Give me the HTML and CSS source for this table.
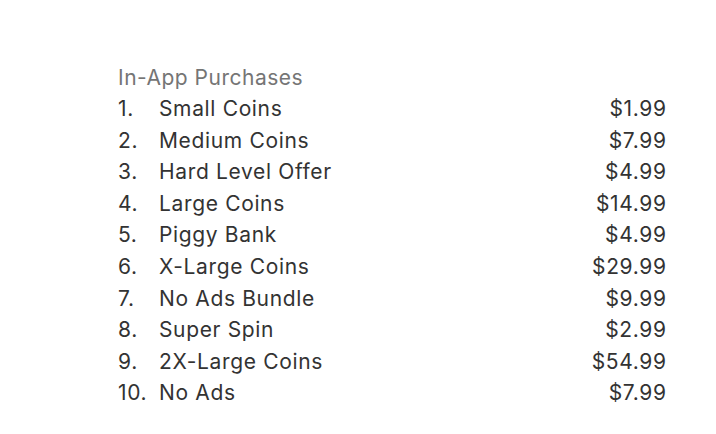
FILE: index.html
```html
<!DOCTYPE html>
<html>
<head>
<meta charset="utf-8">
<link rel="stylesheet" href="styles.css">
</head>
<body>
<section class="iap">
  <h2 class="iap-title">In-App Purchases</h2>
  <ol class="iap-list">
    <li class="iap-row"><span class="num">1.</span><span class="name">Small Coins</span><span class="price">$1.99</span></li>
    <li class="iap-row"><span class="num">2.</span><span class="name">Medium Coins</span><span class="price">$7.99</span></li>
    <li class="iap-row"><span class="num">3.</span><span class="name">Hard Level Offer</span><span class="price">$4.99</span></li>
    <li class="iap-row"><span class="num">4.</span><span class="name">Large Coins</span><span class="price">$14.99</span></li>
    <li class="iap-row"><span class="num">5.</span><span class="name">Piggy Bank</span><span class="price">$4.99</span></li>
    <li class="iap-row"><span class="num">6.</span><span class="name">X-Large Coins</span><span class="price">$29.99</span></li>
    <li class="iap-row"><span class="num">7.</span><span class="name">No Ads Bundle</span><span class="price">$9.99</span></li>
    <li class="iap-row"><span class="num">8.</span><span class="name">Super Spin</span><span class="price">$2.99</span></li>
    <li class="iap-row"><span class="num">9.</span><span class="name">2X-Large Coins</span><span class="price">$54.99</span></li>
    <li class="iap-row"><span class="num">10.</span><span class="name">No Ads</span><span class="price">$7.99</span></li>
  </ol>
</section>
</body>
</html>
```
FILE: styles.css
```css
html, body {
  margin: 0;
  padding: 0;
  background: #ffffff;
}
body {
  font-family: Inter, "Liberation Sans", sans-serif;
  color: #333333;
}
.iap {
  margin: 63px 0 0 118px;
  width: 548px;
}
.iap-title {
  margin: 0;
  font-size: 21px;
  font-weight: 400;
  letter-spacing: 0.5px;
  line-height: 30px;
  color: #757575;
}
.iap-list {
  list-style: none;
  margin: 0;
  padding: 0;
}
.iap-row {
  display: grid;
  grid-template-columns: 41px 1fr auto;
  font-size: 21px;
  letter-spacing: 0.65px;
  line-height: 31.6px;
}
.price {
  text-align: right;
  margin-right: -0.65px;
}
```
